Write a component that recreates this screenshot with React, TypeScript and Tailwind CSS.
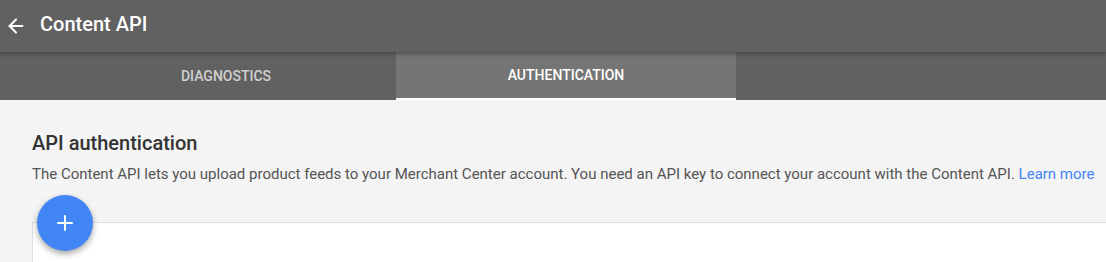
import { ArrowLeft, Plus } from "lucide-react";

export default function App() {
  return (
    <div className="w-[1106px] h-[262px] overflow-hidden bg-[#f4f4f4] font-['Roboto',sans-serif]">
      {/* top bar */}
      <div className="relative z-10 h-[52px] bg-[#616161] flex items-center shadow-[0_2px_4px_rgba(0,0,0,0.3)]">
        <ArrowLeft className="ml-[5px] w-[22px] h-[22px] text-white" strokeWidth={2.2} />
        <h1 className="ml-[13px] text-[20px] font-medium text-white leading-none -mt-[4px]">Content API</h1>
      </div>

      {/* tabs */}
      <div className="h-[48px] bg-[#616161] flex pl-[56px]">
        <div className="w-[340px] flex items-center justify-center text-[14px] font-medium text-[#d0d0d0]">
          DIAGNOSTICS
        </div>
        <div className="w-[340px] flex items-center justify-center text-[14px] font-medium text-white bg-[#757575] border-b-2 border-white">
          AUTHENTICATION
        </div>
      </div>

      {/* content */}
      <div className="pl-[32px] pt-[30px]">
        <h2 className="text-[20px] font-medium text-[#333] leading-[26px]">API authentication</h2>
        <p className="mt-[8px] text-[15px] text-[#555] leading-[20px]">
          The Content API lets you upload product feeds to your Merchant Center account. You need an API key to connect your account with the Content API.{" "}
          <a className="text-[#4285f4]">Learn more</a>
        </p>

        <div className="relative mt-[38px] h-[60px] bg-white border-t border-l border-[#e0e0e0]">
          <button className="absolute left-[4px] -top-[28px] w-[56px] h-[56px] rounded-full bg-[#4285f4] flex items-center justify-center shadow-[0_3px_6px_rgba(0,0,0,0.35)]">
            <Plus className="w-[24px] h-[24px] text-white" strokeWidth={2} />
          </button>
        </div>
      </div>
    </div>
  );
}
